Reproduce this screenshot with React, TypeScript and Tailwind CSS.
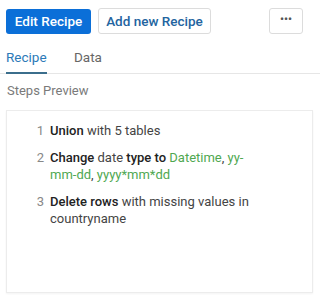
export default function App() {
  const steps = [
    (
      <>
        <b className="font-medium text-[#222]">Union</b> with 5 tables
      </>
    ),
    (
      <>
        <b className="font-medium text-[#222]">Change</b> date <b className="font-medium text-[#222]">type to</b>{" "}
        <span className="text-[#4fa851]">Datetime</span>, <span className="text-[#4fa851]">yy-mm-dd</span>,{" "}
        <span className="text-[#4fa851]">yyyy*mm*dd</span>
      </>
    ),
    (
      <>
        <b className="font-medium text-[#222]">Delete rows</b> with missing values in countryname
      </>
    ),
  ];

  return (
    <div className="w-[320px] h-[303px] bg-white font-['Roboto',sans-serif] text-[#444] overflow-hidden">
      <div className="flex items-center pt-2 px-[6px]">
        <button className="h-[25px] w-[85px] rounded-[3px] bg-[#0b6fd8] text-white text-[13.5px] font-medium">
          Edit Recipe
        </button>
        <button className="ml-[7px] h-[26px] w-[113px] rounded-[3px] border border-[#dcdcdc] bg-white text-[#2364a0] text-[13.5px] font-medium">
          Add new Recipe
        </button>
        <button className="ml-auto mr-[11px] h-[26px] w-[34px] rounded-[3px] border border-[#dcdcdc] bg-white text-[#555] text-[11px] font-bold leading-none pb-[3px]">
          •••
        </button>
      </div>

      <div className="flex mt-[13px] border-b border-[#e6e6e6] text-[13.5px]">
        <div className="ml-[6px] w-[41px] pb-[5px] border-b-2 border-[#3b6e8c] -mb-px text-[#2c7ab8]">Recipe</div>
        <div className="ml-[27px] text-[#666]">Data</div>
      </div>

      <div className="px-[7px] mt-[7px] text-[13px] text-[#7a7a7a]">Steps Preview</div>

      <div className="mx-[6px] mt-[9px] h-[183px] w-[307px] border border-[#ececec] shadow-[0_1px_2px_rgba(0,0,0,0.05)] pt-[11px]">
        <ol className="flex flex-col gap-[10px] text-[13px] leading-[17px]">
          {steps.map((s, i) => (
            <li key={i} className="flex">
              <span className="w-[43px] text-right pr-[6px] text-[#888]">{i + 1}</span>
              <span className="w-[200px] text-[#444]">{s}</span>
            </li>
          ))}
        </ol>
      </div>
    </div>
  );
}
